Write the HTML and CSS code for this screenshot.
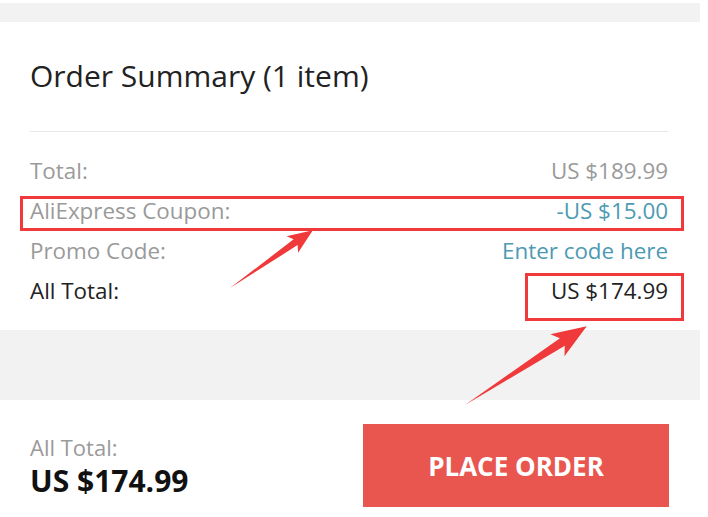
FILE: index.html
```html
<!DOCTYPE html>
<html lang="en">
<head>
<meta charset="utf-8">
<title>Order Summary</title>
<link rel="stylesheet" href="styles.css">
</head>
<body>
<div class="page">
  <div class="band band-top"></div>
  <section class="summary">
    <h1 class="title">Order Summary (1 item)</h1>
    <div class="divider"></div>
    <div class="rows">
      <div class="row muted"><span>Total:</span><span>US $189.99</span></div>
      <div class="row muted"><span>AliExpress Coupon:</span><span class="link">-US $15.00</span></div>
      <div class="row muted"><span>Promo Code:</span><span class="link">Enter code here</span></div>
      <div class="row strong"><span>All Total:</span><span>US $174.99</span></div>
    </div>
  </section>
  <div class="band band-mid"></div>
  <footer class="footer">
    <div class="footer-total">
      <div class="footer-label">All Total:</div>
      <div class="footer-amount">US $174.99</div>
    </div>
    <button class="place-order">PLACE ORDER</button>
  </footer>

  <div class="mark mark-coupon"></div>
  <div class="mark mark-total"></div>
  <svg class="arrows" width="708" height="517" viewBox="0 0 708 517">
    <polygon fill="#f0393a" transform="translate(230 285) rotate(-34.9)" points="0,0 80,-3.5 76,-10 101,0 76,10 80,3.5"/>
    <polygon fill="#f0393a" transform="translate(465 402) rotate(-32.9)" points="0,0 116,-4.5 110,-13 145,0 110,13 116,4.5"/>
  </svg>
</div>
</body>
</html>
```
FILE: styles.css
```css
* { box-sizing: border-box; margin: 0; padding: 0; }
html, body { background: #fff; }
body {
  font-family: "Open Sans", "Noto Sans", sans-serif;
  color: #222;
  width: 708px;
  height: 517px;
  overflow: hidden;
}
.page {
  position: relative;
  width: 708px;
  height: 517px;
}
.band {
  background: #f2f2f2;
  width: 700px;
}
.band-top {
  margin-top: 3px;
  height: 19px;
}
.summary {
  padding: 0 40px 0 30px;
  width: 708px;
}
.title {
  font-weight: 400;
  font-size: 30px;
  line-height: 40px;
  margin-top: 34px;
  color: #222;
}
.divider {
  margin-top: 35px;
  height: 1px;
  background: #e8e8e8;
}
.rows {
  padding-top: 19px;
}
.row {
  display: flex;
  justify-content: space-between;
  font-size: 22.4px;
  line-height: 40px;
  height: 40px;
}
.row.muted { color: #9a9a9a; }
.row.strong { color: #222; }
.link { color: #4d9ab3; }
.band-mid {
  margin-top: 19px;
  height: 70px;
}
.footer {
  display: flex;
  justify-content: space-between;
  align-items: flex-start;
  padding: 24px 39px 0 30px;
  width: 708px;
}
.footer-total {
  margin-top: 8px;
}
.footer-label {
  font-size: 22px;
  line-height: 30px;
  color: #9a9a9a;
}
.footer-amount {
  font-size: 30px;
  line-height: 38px;
  font-weight: 700;
  color: #111;
}
.place-order {
  width: 306px;
  height: 83px;
  border: none;
  background: #e9564f;
  color: #fff;
  font-family: "Open Sans", "Noto Sans", sans-serif;
  font-weight: 700;
  font-size: 26px;
  letter-spacing: 0;
}
.mark {
  position: absolute;
  border: 3px solid #f0393a;
}
.mark-coupon {
  left: 20px;
  top: 193px;
  width: 664px;
  height: 35px;
}
.mark-total {
  left: 525px;
  top: 270px;
  width: 159px;
  height: 48px;
}
.arrows {
  position: absolute;
  left: 0;
  top: 0;
  pointer-events: none;
}
```
